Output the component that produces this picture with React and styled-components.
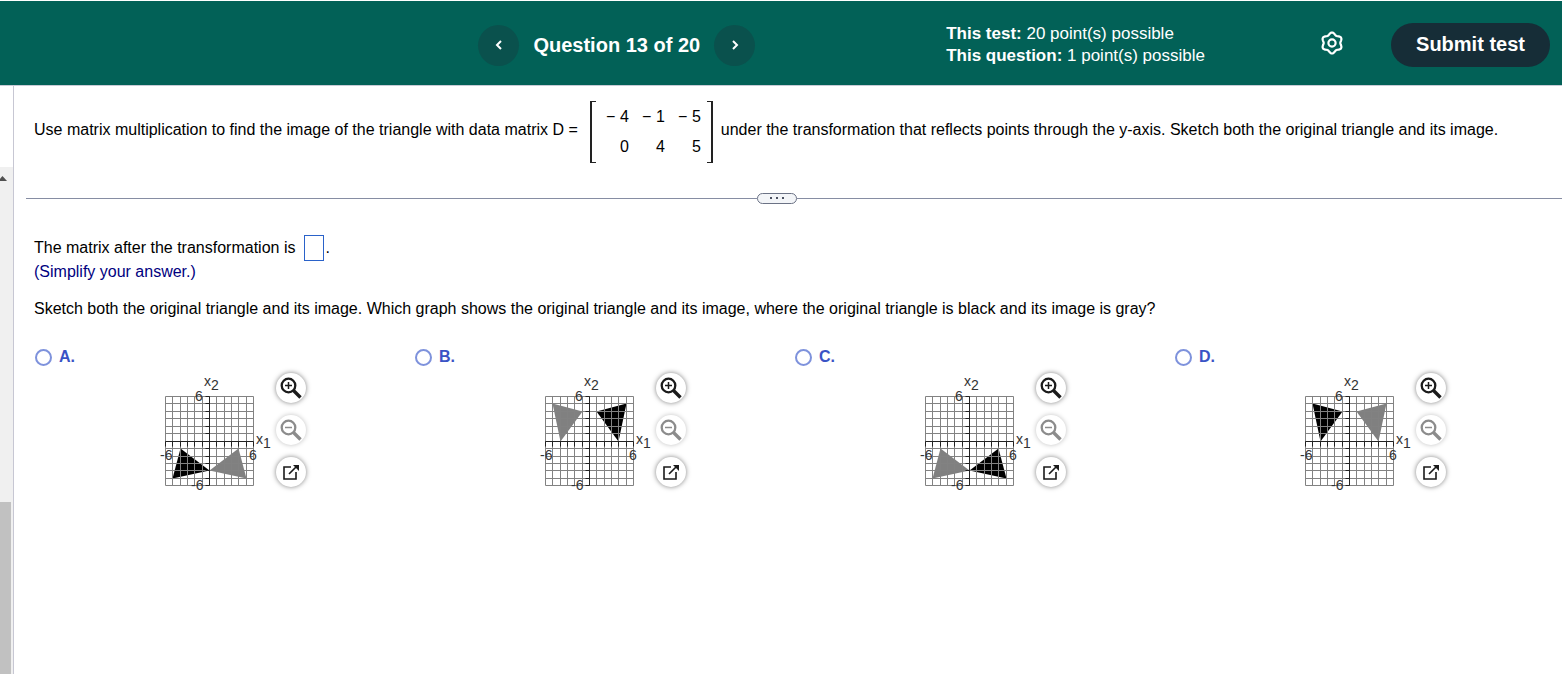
import React, { useState } from 'react'
import styled, { createGlobalStyle } from 'styled-components'

const GlobalStyle = createGlobalStyle`
  * {
    box-sizing: border-box;
  }

  body {
    margin: 0;
    background: #fff;
    color: #000;
    font-family: "Liberation Sans", Arial, sans-serif;
    font-size: 16px;
    line-height: 22px;
  }

  button, input {
    font-family: inherit;
  }

  svg {
    display: block;
  }
`

const Page = styled.div`
  display: flex;
  flex-direction: column;
  min-height: 100vh;
  overflow-x: hidden;
  padding-top: 1px;
`

const Header = styled.header`
  display: flex;
  align-items: center;
  justify-content: flex-end;
  height: 85px;
  padding: 4px 12px 0 16px;
  background: #026157;
  border-bottom: 1px solid #c7cbd6;
  color: #fff;
`

const QuestionNav = styled.nav`
  display: flex;
  align-items: center;
  gap: 14px;
  margin-right: 191px;
`

const RoundButton = styled.button`
  display: flex;
  align-items: center;
  justify-content: center;
  width: 41px;
  height: 41px;
  padding: 0;
  border: none;
  border-radius: 50%;
  background: #0a514d;
  color: #fff;
  cursor: pointer;
`

const QuestionTitle = styled.h1`
  margin: 0;
  font-size: 20px;
  line-height: 24px;
  white-space: nowrap;
`

const Points = styled.div`
  margin-right: 115px;
  font-size: 17px;
  line-height: 22px;
  white-space: nowrap;
`

const GearButton = styled.button`
  display: flex;
  padding: 0;
  margin: 0 47px 4px 0;
  border: none;
  background: none;
  color: #fff;
  cursor: pointer;
`

const SubmitButton = styled.button`
  width: 159px;
  height: 44px;
  padding: 0 0 2px;
  border: none;
  border-radius: 22px;
  background: #162d37;
  color: #fff;
  font-size: 20px;
  font-weight: bold;
  cursor: pointer;
`

const Body = styled.div`
  display: flex;
  flex: 1;
`

const SideRail = styled.aside`
  display: flex;
  flex-direction: column;
  flex: none;
  width: 14px;
  padding-top: 81px;
  border-right: 1px solid #c7c7d3;
`

const Track = styled.div`
  display: flex;
  flex-direction: column;
  flex: 1;
  background: #f0f0f0;
`

const TrackTop = styled.div`
  height: 335px;
  padding-top: 9px;
`

const Thumb = styled.div`
  flex: 1;
  width: 11px;
  background: #c1c1c1;
`

const Main = styled.main`
  flex: 1;
  min-width: 0;
  padding: 15px 0 0 12px;
`

const Prompt = styled.div`
  display: flex;
  align-items: center;
  padding-left: 8px;
  white-space: nowrap;
`

const PromptText = styled.span`
  margin-bottom: 4px;
`

const MatrixBox = styled.span`
  display: flex;
  margin: 0 8px 0 12px;
`

const Bracket = styled.span`
  width: 6px;
  border: solid #222;
  border-width: ${p => p.$right ? '1px 2px 1px 0' : '1px 0 1px 2px'};
`

const Matrix = styled.table`
  border-collapse: collapse;
  margin: 1px 6px 1px 0;

  td {
    width: 36px;
    height: 30px;
    padding: 0;
    text-align: right;
  }

  td:first-child {
    width: 33px;
  }
`

const Divider = styled.div`
  display: flex;
  align-items: center;
  height: 12px;
  margin-top: 29px;

  &::before, &::after {
    content: '';
    height: 1px;
    background: #868da3;
  }

  &::before {
    width: 731px;
  }

  &::after {
    flex: 1;
  }
`

const Expand = styled.button`
  display: flex;
  align-items: center;
  justify-content: center;
  gap: 4px;
  width: 40px;
  height: 11px;
  padding: 0;
  border: 1px solid #6b7285;
  border-radius: 6px;
  background: #f3f5f8;
  cursor: pointer;
`

const Dot = styled.i`
  width: 2px;
  height: 2px;
  background: #4c5262;
`

const Answer = styled.section`
  padding: 31px 8px 0 8px;
`

const AnswerLine = styled.label`
  display: flex;
  align-items: center;
  gap: 9px;
  height: 26px;
`

const AnswerInput = styled.input`
  width: 20px;
  height: 26px;
  padding: 2px;
  margin-right: -8px;
  border: 1px solid #2a62c9;
  border-radius: 0;
  outline: none;
  font-size: 16px;
`

const Hint = styled.div`
  color: #000080;
`

const Ask = styled.p`
  margin: 15px 0 0;
`

const Options = styled.div`
  display: grid;
  grid-template-columns: repeat(4, 1fr);
  margin-top: 26px;
`

const OptionLabel = styled.label`
  display: flex;
  align-items: center;
  gap: 7px;
  padding-left: 1px;
  color: #3a53c5;
  font-weight: bold;
  cursor: pointer;
`

const Radio = styled.input`
  appearance: none;
  width: 17px;
  height: 17px;
  margin: 0;
  border: 2px solid #7e92dc;
  border-radius: 50%;
  background: #fff;

  &:checked {
    background: radial-gradient(#3a53c5 0 4px, #fff 5px);
  }
`

const Figure = styled.div`
  display: flex;
  gap: 2px;
  padding: 4px 0 0 121px;
`

const Tools = styled.div`
  display: flex;
  flex-direction: column;
  gap: 12px;
  padding-top: 1px;
`

const ToolButton = styled.button`
  display: flex;
  align-items: center;
  justify-content: center;
  width: 30px;
  height: 30px;
  padding: 0;
  border: none;
  border-radius: 50%;
  background: #fff;
  box-shadow: 0 0 5px rgba(0, 0, 0, ${p => p.disabled ? 0.25 : 0.5});
  color: ${p => p.disabled ? '#8c8c8c' : '#1a1a1a'};
`

const matrix = [['− 4', '− 1', '− 5'], ['0', '4', '5']]

const upperLeft = [[-5, 5], [-1, 4], [-4, 0]]
const lowerLeft = [[-4, -1], [0, -4], [-5, -5]]
const mirror = points => points.map(([x, y]) => [-x, y])

const options = [
  { name: 'A', black: lowerLeft, gray: mirror(lowerLeft) },
  { name: 'B', black: mirror(upperLeft), gray: upperLeft },
  { name: 'C', black: mirror(lowerLeft), gray: lowerLeft },
  { name: 'D', black: upperLeft, gray: mirror(upperLeft) }
]

// graph units to pixels, centred on a pixel so the lines stay sharp
const px = x => Math.round(54 + x * 7.35) + 0.5
const py = y => Math.round(68.6 - y * 7.45) + 0.5
const toPoints = points => points.map(([x, y]) => `${px(x)},${py(y)}`).join(' ')
const units = Array.from({ length: 13 }, (_, i) => i - 6)

const Graph = ({ black, gray }) => (
  <svg width='119' height='122' role='img' aria-label='Triangle and its image'>
    <polygon points={toPoints(gray)} fill='#808080' />
    <polygon points={toPoints(black)} fill='#000' />
    <g stroke='#828282'>
      {units.map(n => <path key={n} d={`M${px(n)} ${py(6)}V${py(-6)}M${px(-6)} ${py(n)}H${px(6)}`} />)}
    </g>
    <g stroke='#222'>
      <path d={`M${px(-6)} ${py(0)}H${px(6)}M${px(0)} ${py(6)}V${py(-6)}`} />
      {units.map(n => <path key={n} d={`M${px(n)} ${py(0)}v5M${px(0)} ${py(n)}h-4`} />)}
    </g>
    <g fill='#333' fontSize='14'>
      <text x='49' y='14'>x<tspan dy='4'>2</tspan></text>
      <text x='101' y='72'>x<tspan dy='4'>1</tspan></text>
      <text x='40' y='29'>6</text>
      <text x='5' y='88'>-6</text>
      <text x='94' y='88'>6</text>
      <text x='36' y='118'>-6</text>
    </g>
  </svg>
)

const Magnifier = ({ plus }) => (
  <svg width='24' height='24' fill='none' stroke='currentColor'>
    <circle cx='9.5' cy='9.5' r='6.8' strokeWidth='2.3' />
    <path d='M14.5 14.500L21.500 21.500' strokeWidth='3.4' />
    <path d={plus ? 'M6 9.500h7M9.500 6v7' : 'M6 9.500h7'} strokeWidth='1.5' />
  </svg>
)

const Popout = () => (
  <svg width='18' height='18' fill='none' stroke='currentColor' strokeWidth='1.6'>
    <path d='M9 4H2v12h12V9M7 11l7-7' />
    <path d='M11 2h6v6z' fill='currentColor' stroke='none' />
  </svg>
)

// six rounded lobes, the first one pointing up
const gearPoints = Array.from({ length: 72 }, (_, i) => {
  const angle = i * Math.PI / 36
  const radius = 9.4 - 1.1 * Math.cos(6 * angle)
  return `${12 + radius * Math.cos(angle)},${12 + radius * Math.sin(angle)}`
}).join(' ')

const Gear = () => (
  <svg width='24' height='24' viewBox='0 0 24 24' fill='none' stroke='currentColor' strokeWidth='2.2'>
    <polygon points={gearPoints} strokeLinejoin='round' />
    <circle cx='12' cy='12' r='3.6' />
  </svg>
)

const Chevron = ({ d }) => (
  <svg width='8' height='12' fill='none' stroke='currentColor' strokeWidth='2'>
    <path d={d} />
  </svg>
)

const App = () => {
  const [choice, setChoice] = useState('')
  const [answer, setAnswer] = useState('')

  return (
    <Page>
      <GlobalStyle />
      <Header>
        <QuestionNav>
          <RoundButton aria-label='Previous question'><Chevron d='M6 2L2 6l4 4' /></RoundButton>
          <QuestionTitle>Question 13 of 20</QuestionTitle>
          <RoundButton aria-label='Next question'><Chevron d='M2 2l4 4-4 4' /></RoundButton>
        </QuestionNav>
        <Points>
          <div><b>This test:</b> 20 point(s) possible</div>
          <div><b>This question:</b> 1 point(s) possible</div>
        </Points>
        <GearButton aria-label='Settings'><Gear /></GearButton>
        <SubmitButton>Submit test</SubmitButton>
      </Header>
      <Body>
        <SideRail>
          <Track>
            <TrackTop>
              <svg width='8' height='6'><path d='M-2 5L2.500 0L7 5z' fill='#505050' /></svg>
            </TrackTop>
            <Thumb />
          </Track>
        </SideRail>
        <Main>
          <Prompt>
            <PromptText>Use matrix multiplication to find the image of the triangle with data matrix D =</PromptText>
            <MatrixBox>
              <Bracket />
              <Matrix>
                <tbody>
                  {matrix.map((row, i) => (
                    <tr key={i}>{row.map((cell, j) => <td key={j}>{cell}</td>)}</tr>
                  ))}
                </tbody>
              </Matrix>
              <Bracket $right />
            </MatrixBox>
            <PromptText>under the transformation that reflects points through the y-axis. Sketch both the original triangle and its image.</PromptText>
          </Prompt>
          <Divider>
            <Expand aria-label='Expand question'><Dot /><Dot /><Dot /></Expand>
          </Divider>
          <Answer>
            <AnswerLine>
              The matrix after the transformation is
              <AnswerInput value={answer} onChange={e => setAnswer(e.target.value)} />
              .
            </AnswerLine>
            <Hint>(Simplify your answer.)</Hint>
            <Ask>Sketch both the original triangle and its image. Which graph shows the original triangle and its image, where the original triangle is black and its image is gray?</Ask>
            <Options>
              {options.map(option => (
                <div key={option.name}>
                  <OptionLabel>
                    <Radio
                      type='radio'
                      name='graph'
                      checked={choice === option.name}
                      onChange={() => setChoice(option.name)}
                    />
                    {option.name}.
                  </OptionLabel>
                  <Figure>
                    <Graph black={option.black} gray={option.gray} />
                    <Tools>
                      <ToolButton aria-label='Zoom in'><Magnifier plus /></ToolButton>
                      <ToolButton aria-label='Zoom out' disabled><Magnifier /></ToolButton>
                      <ToolButton aria-label='Open in new window'><Popout /></ToolButton>
                    </Tools>
                  </Figure>
                </div>
              ))}
            </Options>
          </Answer>
        </Main>
      </Body>
    </Page>
  )
}

export default App
